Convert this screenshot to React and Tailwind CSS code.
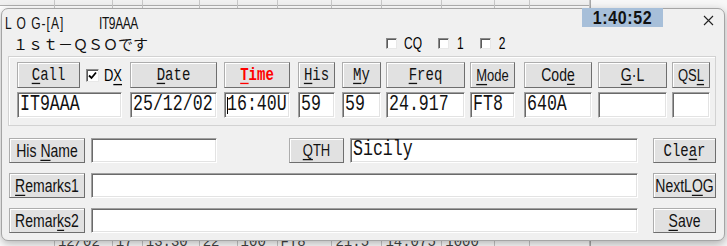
import React from "react";

function U({ children }) {
  return <span className="underline decoration-1 underline-offset-[2px]">{children}</span>;
}

function Btn({ className = "", children, mono, red, small }) {
  const font = mono
    ? "font-['Liberation_Mono',monospace] text-[14px] scale-y-[1.3]"
    : small
    ? "font-['Liberation_Sans',Arial,sans-serif] text-[13px] scale-y-[1.3]"
    : "font-['Liberation_Sans',Arial,sans-serif] text-[14px] scale-y-[1.25]";
  return (
    <div
      className={
        "flex items-center justify-center leading-none bg-[#e1e1e1] border border-[#adadad] border-b-[#6e6e6e] border-r-[#6e6e6e] shadow-[inset_1px_1px_0_#ffffff] " +
        className
      }
    >
      <span
        className={
          "inline-block leading-none whitespace-pre " +
          font +
          (red ? " text-[#ff0000] font-bold" : " text-[#111]")
        }
      >
        {children}
      </span>
    </div>
  );
}

function Inp({ className = "", value = "", caret }) {
  return (
    <div
      className={
        "flex items-center leading-none bg-white border border-[#a0a0a0] border-b-white border-r-white shadow-[inset_1px_1px_0_#6a6a6a,inset_-1px_-1px_0_#e3e3e3] pl-[2px] overflow-hidden " +
        className
      }
    >
      {caret && <span className="w-px h-[17px] bg-black -mr-px" />}
      <span className="inline-block scale-y-[1.3] text-[16.6px] leading-none font-['Liberation_Mono',monospace] text-[#111] whitespace-pre">
        {value}
      </span>
    </div>
  );
}

function Box({ checked, className = "" }) {
  return (
    <div
      className={
        "bg-white border border-[#8a8a8a] border-b-[#e8e8e8] border-r-[#e8e8e8] shadow-[inset_1px_1px_0_#5a5a5a] flex items-center justify-center " +
        className
      }
    >
      {checked && (
        <svg width="9" height="9" viewBox="0 0 9 9">
          <path d="M1 4.5 L3.5 7 L8 1.5" fill="none" stroke="#000" strokeWidth="1.8" />
        </svg>
      )}
    </div>
  );
}

const bgCols = [
  { w: "w-[55px]", t: "" },
  { w: "w-[58px]", t: "12/02" },
  { w: "w-[30px]", t: "17" },
  { w: "w-[57px]", t: "13:30" },
  { w: "w-[38px]", t: "22" },
  { w: "w-[40px]", t: "100" },
  { w: "w-[55px]", t: "FT8" },
  { w: "w-[50px]", t: "21.5" },
  { w: "w-[60px]", t: "14.075" },
  { w: "w-[53px]", t: "1000" },
  { w: "w-[35px]", t: "" },
  { w: "w-[60px]", t: "" },
];

export default function App() {
  return (
    <div className="relative w-[727px] h-[246px] overflow-hidden bg-[#f7f7f7]">
      {/* background window (list behind the dialog) */}
      <div className="flex w-[591px] h-[246px] bg-white border-r border-[#a8a8a8]">
        {bgCols.map((c, i) => (
          <div key={i} className={"flex flex-col h-full border-r border-[#c8c8c8] " + c.w}>
            <div className="h-[6px] bg-[#f0f0f0] border-b border-[#b0b0b0]" />
            <div className="flex-1 flex flex-col justify-end pl-[3px] overflow-hidden">
              <span className="text-[14px] leading-[12px] h-[10px] text-[#444] font-['Liberation_Mono',monospace] whitespace-pre">
                {c.t}
              </span>
            </div>
          </div>
        ))}
      </div>

      {/* dialog window */}
      <div className="absolute left-[1px] top-[8px] w-[724px] h-[233px] rounded-[7px] border border-[#a5a5a5] bg-[#f0f0f0] shadow-[0_3px_10px_rgba(0,0,0,0.3)] flex flex-col font-['Liberation_Sans',Arial,sans-serif] text-black">
        {/* title row */}
        <div className="flex items-start h-[22px] leading-none">
          <div className="w-[97px] pl-[3px] pt-[6px] leading-none">
            <span className="inline-block scale-y-[1.3] text-[12px] leading-none tracking-[1px] text-[#111]">
              L O G-[A]
            </span>
          </div>
          <div className="w-[483px] pt-[6px] leading-none">
            <span className="inline-block scale-y-[1.3] text-[12px] leading-none tracking-[-0.4px] text-[#111]">
              IT9AAA
            </span>
          </div>
          <div className="w-[81px] h-[19px] -mt-[1px] bg-[#a7bfd9] flex items-center justify-center leading-none">
            <span className="inline-block scale-y-[1.1] text-[16px] leading-none font-bold tracking-[0.6px] text-[#111]">
              1:40:52
            </span>
          </div>
          <div className="ml-[40px] mt-[6px] w-[11px] h-[11px]">
            <svg width="11" height="11" viewBox="0 0 11 11">
              <path d="M1 1 L10 10 M10 1 L1 10" stroke="#222" strokeWidth="1.1" fill="none" />
            </svg>
          </div>
        </div>

        {/* row 2 */}
        <div className="flex items-center h-[25px] leading-none">
          <div className="w-[384px] pl-[11px] pt-[2px] leading-none">
            <span className="text-[15px] leading-none font-['Noto_Sans_CJK_JP',sans-serif] text-[#111]">
              １ｓｔ－ＱＳＯです
            </span>
          </div>
          <Box className="w-[11px] h-[11px]" />
          <span className="ml-[7px] inline-block scale-y-[1.3] text-[12px] leading-none">CQ</span>
          <Box className="ml-[16px] w-[11px] h-[11px]" />
          <span className="ml-[8px] inline-block scale-y-[1.3] text-[12px] leading-none">1</span>
          <Box className="ml-[16px] w-[11px] h-[11px]" />
          <span className="ml-[8px] inline-block scale-y-[1.3] text-[12px] leading-none">2</span>
        </div>

        {/* group box */}
        <div className="ml-[6px] w-[708px] h-[70px] border border-[#d2d2d2] shadow-[inset_1px_1px_0_#ffffff] pt-[5px] pl-[8px] flex">
          {/* Call column */}
          <div className="w-[105px] flex flex-col gap-[4px]">
            <div className="flex items-center h-[26px] leading-none">
              <Btn mono className="w-[64px] h-[26px]">
                <U>C</U>all
              </Btn>
              <Box checked className="ml-[6px] w-[13px] h-[13px]" />
              <span className="ml-[5px] inline-block scale-y-[1.3] text-[13px] leading-none">
                D<U>X</U>
              </span>
            </div>
            <Inp className="h-[26px]" value="IT9AAA" />
          </div>
          <div className="ml-[8px] w-[87px] flex flex-col gap-[4px]">
            <Btn mono className="h-[26px]">
              <U>D</U>ate
            </Btn>
            <Inp className="h-[26px]" value="25/12/02" />
          </div>
          <div className="ml-[7px] w-[66px] flex flex-col gap-[4px]">
            <Btn mono red className="h-[26px]">
              <U>T</U>ime
            </Btn>
            <Inp className="h-[26px]" value="16:40U" caret />
          </div>
          <div className="ml-[8px] w-[37px] flex flex-col gap-[4px]">
            <Btn mono className="h-[26px]">
              <U>H</U>is
            </Btn>
            <Inp className="h-[26px]" value="59" />
          </div>
          <div className="ml-[7px] w-[39px] flex flex-col gap-[4px]">
            <Btn mono className="h-[26px]">
              <U>M</U>y
            </Btn>
            <Inp className="h-[26px]" value="59" />
          </div>
          <div className="ml-[5px] w-[79px] flex flex-col gap-[4px]">
            <Btn mono className="h-[26px]">
              <U>F</U>req
            </Btn>
            <Inp className="h-[26px]" value="24.917" />
          </div>
          <div className="ml-[5px] w-[45px] flex flex-col gap-[4px]">
            <Btn small className="h-[26px]">
              <U>M</U>ode
            </Btn>
            <Inp className="h-[26px]" value="FT8" />
          </div>
          <div className="ml-[9px] w-[68px] flex flex-col gap-[4px]">
            <Btn className="h-[26px]">
              Cod<U>e</U>
            </Btn>
            <Inp className="h-[26px]" value="640A" />
          </div>
          <div className="ml-[6px] w-[69px] flex flex-col gap-[4px]">
            <Btn className="h-[26px]">
              <U>G</U>·L
            </Btn>
            <Inp className="h-[26px]" value="" />
          </div>
          <div className="ml-[5px] w-[38px] flex flex-col gap-[4px]">
            <Btn small className="h-[26px]">
              QS<U>L</U>
            </Btn>
            <Inp className="h-[26px]" value="" />
          </div>
        </div>

        {/* lower rows */}
        <div className="mt-[12px] pl-[7px] flex flex-col gap-[10px]">
          <div className="flex h-[25px]">
            <Btn className="w-[76px]">
              His <U>N</U>ame
            </Btn>
            <Inp className="ml-[6px] w-[126px]" value="" />
            <Btn small className="ml-[72px] w-[55px]">
              <U>Q</U>TH
            </Btn>
            <Inp className="ml-[6px] w-[288px]" value="Sicily" />
            <Btn mono className="ml-[15px] w-[63px]">
              Cle<U>a</U>r
            </Btn>
          </div>
          <div className="flex h-[25px]">
            <Btn className="w-[76px]">
              <U>R</U>emarks1
            </Btn>
            <Inp className="ml-[6px] w-[547px]" value="" />
            <Btn className="ml-[15px] w-[63px]">
              NextL<U>O</U>G
            </Btn>
          </div>
          <div className="flex h-[25px]">
            <Btn className="w-[76px]">
              Remar<U>k</U>s2
            </Btn>
            <Inp className="ml-[6px] w-[547px]" value="" />
            <Btn className="ml-[15px] w-[63px]">
              <U>S</U>ave
            </Btn>
          </div>
        </div>
      </div>
    </div>
  );
}
